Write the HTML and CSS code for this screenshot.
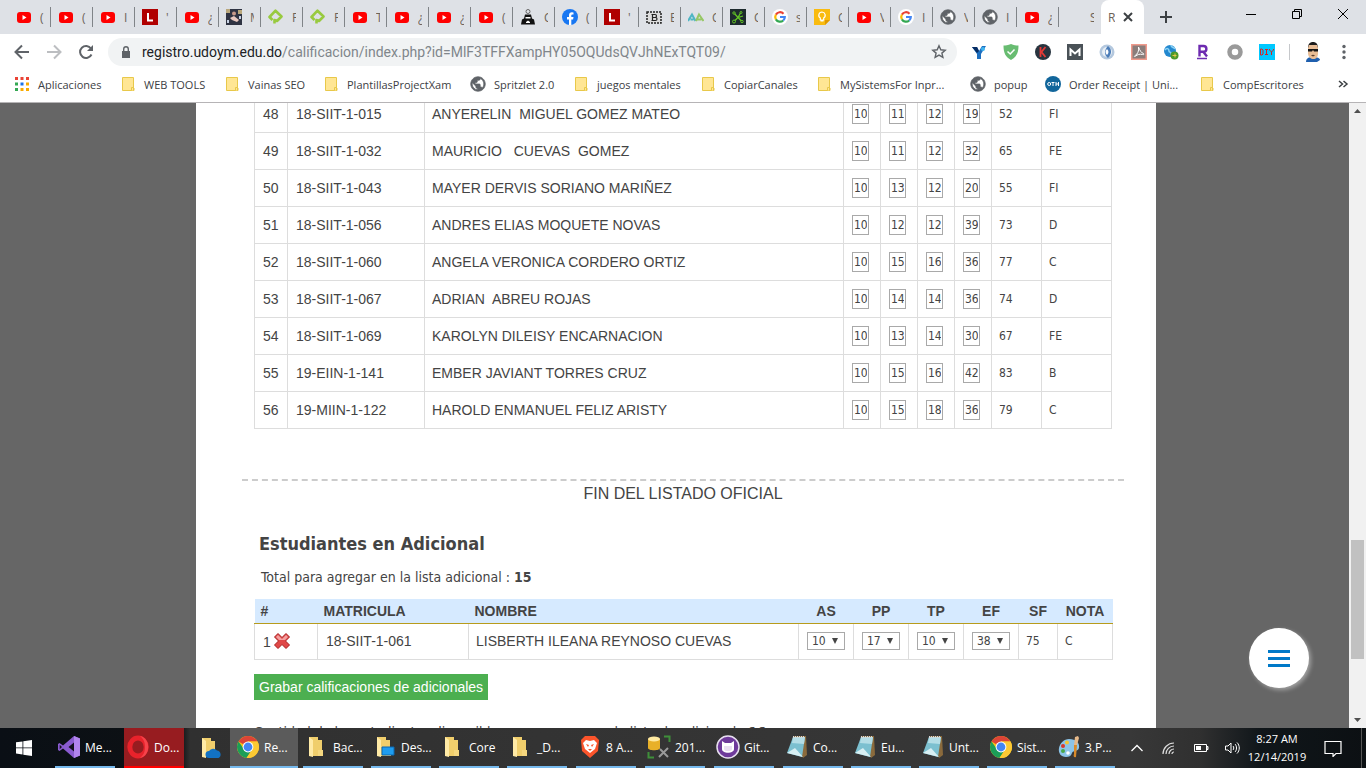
FILE: index.html
```html
<!DOCTYPE html>
<html lang="es">
<head>
<meta charset="utf-8">
<title>Registro de calificaciones</title>
<link rel="stylesheet" href="styles.css">
</head>
<body>
<svg class="defs" aria-hidden="true">
  <defs>
    <symbol id="yt" viewBox="0 0 16 16"><rect x="1" y="3" width="14" height="11" rx="3" fill="#f00"/><path d="M6.500 6v5l4-2.500z" fill="#fff"/></symbol>
    <symbol id="lbox" viewBox="0 0 16 16"><path d="M0 0h16v16H0z" fill="#b00000"/><path d="M6 4v7.500h5" fill="none" stroke="#fff" stroke-width="2"/></symbol>
    <symbol id="photo" viewBox="0 0 16 16"><path d="M0 0h16v16H0z" fill="#2f3342"/><path d="M0 0h4v4H0zM12 1h4v4h-4z" fill="#b9a77c"/><path d="M4 9l4-2 5 4-2 2-5-2z" fill="#e9c9c0"/><circle cx="8" cy="4.500" r="2" fill="#c99a8a"/><path d="M1 11h2v3H1zM13 7h2v3h-2z" fill="#c8d2e4"/></symbol>
    <symbol id="platzi" viewBox="0 0 16 16"><path d="M6.500 14.500V11L9 12l4.500-4.500L7.500 1.700 1.500 8l3 3" fill="none" stroke="#98ca3f" stroke-width="2.600" stroke-linejoin="round"/></symbol>
    <symbol id="robot" viewBox="0 0 16 16"><circle cx="8" cy="2.500" r="2" fill="none" stroke="#666"/><path d="M5 5.500h6l1 4 2 1 1 5H1l1-5 2-1z" fill="#111"/><path d="M5.500 8h5v1.500h-5zM6 13l2-1.500L10 13v1H6z" fill="#fff"/></symbol>
    <symbol id="fb" viewBox="0 0 16 16"><circle cx="8" cy="8" r="8" fill="#1877f2"/><path d="M7 16v-5.500H5V8h2V6.500C7 4.300 8.200 3.300 9.800 3.300l1.700.1v2h-1C9.500 5.400 9.300 6 9.300 6.700V8h2.200l-.4 2.500H9.300V16z" fill="#fff"/></symbol>
    <symbol id="bbox" viewBox="0 0 16 16"><path d="M1 3h14v11H1z" fill="#ddd" stroke="#222" stroke-width="1.500" stroke-dasharray="2 1"/><path d="M6.500 5.500v6M5.500 5.500h3.500a1.500 1.500 0 0 1 0 3H6.500h3a1.500 1.500 0 0 1 0 3h-4" fill="none" stroke="#222" stroke-width="1.200"/></symbol>
    <symbol id="aa" viewBox="0 0 16 16"><path d="M0 12L4 5.500 7.500 12M2.500 10.500h3" fill="none" stroke="#4fb6c4" stroke-width="2"/><path d="M8 12l3-6.500L15.500 12M9.500 10.500h4" fill="none" stroke="#96c765" stroke-width="2"/></symbol>
    <symbol id="net" viewBox="0 0 16 16"><path d="M0 0h16v16H0z" fill="#1d2a2d"/><path d="M4 4l4 4.500L13 7M8 8.500l4 4M8 8.500L4 12.500M8 8.500L11 3" fill="none" stroke="#62c425" stroke-width="1.300"/><g fill="#1d2a2d" stroke="#62c425"><circle cx="4" cy="4" r="1.200"/><circle cx="4" cy="12.500" r="1.500"/><circle cx="12" cy="12.500" r="1.200"/><circle cx="11" cy="3.500" r="1"/></g></symbol>
    <symbol id="google" viewBox="0 0 16 16"><circle cx="8" cy="8" r="8" fill="#fff"/><g fill="none" stroke-width="2.200"><path d="M11.500 4.700A4.800 4.800 0 0 0 3.900 5.600" stroke="#ea4335"/><path d="M3.900 5.600a4.800 4.800 0 0 0 0 4.800" stroke="#fbbc05"/><path d="M3.900 10.400a4.800 4.800 0 0 0 7.300 1.100" stroke="#34a853"/><path d="M11.200 11.500A4.800 4.800 0 0 0 12.800 8H8" stroke="#4285f4"/></g></symbol>
    <symbol id="keep" viewBox="0 0 16 16"><path d="M0 0h16v11l-5 5H0z" fill="#f9bb10"/><path d="M16 11l-5 5v-5z" fill="#e09a00"/><path d="M8 3a3.200 3.200 0 0 0-1.700 5.900V11h3.400V8.900A3.200 3.200 0 0 0 8 3zM6.500 12h3" fill="none" stroke="#fff" stroke-width="1.200"/></symbol>
    <symbol id="globe" viewBox="1 1 22 22"><circle cx="12" cy="12" r="9" fill="#fff"/><path d="M12 2C6.480 2 2 6.480 2 12s4.480 10 10 10 10-4.480 10-10S17.520 2 12 2zm-1 17.930c-3.950-.49-7-3.850-7-7.930 0-.62.08-1.210.21-1.790L9 15v1c0 1.100.9 2 2 2v1.930zm6.900-2.540c-.26-.81-1-1.390-1.900-1.390h-1v-3c0-.55-.45-1-1-1H8v-2h2c.55 0 1-.45 1-1V7h2c1.100 0 2-.9 2-2v-.41c2.930 1.190 5 4.060 5 7.410 0 2.080-.8 3.970-2.100 5.390z" fill="#5f6368" stroke="#5f6368"/></symbol>
    <symbol id="folder" viewBox="0 0 16 16"><path d="M2.500 1.500h11v10.500h.5v2.500H2.500z" fill="#ffe694" stroke="#e8c84a"/><path d="M11.500 14.500v-3h2v3" fill="#ffe694" stroke="#e8c84a"/></symbol>
    <symbol id="bigfolder" viewBox="0 0 24 24"><path d="M4 2h9v3h4v16H4z" fill="#f0ce6c"/><path d="M4 2l4 3v17l-4-1z" fill="#ffeaa6"/><path d="M13 15h5v6h-5z" fill="#f5d77f"/></symbol>
    <symbol id="chrome" viewBox="0 0 24 24"><circle cx="12" cy="12" r="11" fill="#fbc116"/><path d="M12 12L2.500 6.500A11 11 0 0 1 21.500 6.500H12z" fill="#dc4437"/><path d="M2.500 6.500a11 11 0 0 0 8 16.400L16 14.500l-7 1z" fill="#1b9e58"/><path d="M12 6.500h9.500a11 11 0 0 1-11 16.400L16 15z" fill="#fcc934"/><circle cx="12" cy="12" r="5.400" fill="#fff"/><circle cx="12" cy="12" r="4.400" fill="#4486f4"/></symbol>
    <symbol id="notepad" viewBox="0 0 24 24"><path d="M8 1h13l1 19-4 3z" fill="#8a6a3c"/><path d="M8 2h12l-3 20L2 18z" fill="#7cc0d0"/><path d="M8 2h12l-1 7-12-1z" fill="#b4dde6"/><path d="M2 18l8-5 8 9z" fill="#d8eff3"/><path d="M8 2h12" stroke="#d8d8d8" stroke-width="2" stroke-dasharray="1 1"/></symbol>
  </defs>
</svg>

<header class="browser">
  <div class="tabstrip">
    <div class="tabs">
      <div class="tab"><svg><use href="#yt"/></svg><span>(</span></div>
      <div class="tab"><svg><use href="#yt"/></svg><span>(</span></div>
      <div class="tab"><svg><use href="#yt"/></svg><span>I</span></div>
      <div class="tab"><svg><use href="#lbox"/></svg><span>'</span></div>
      <div class="tab"><svg><use href="#yt"/></svg><span>¿</span></div>
      <div class="tab"><svg><use href="#photo"/></svg><span>M</span></div>
      <div class="tab"><svg><use href="#platzi"/></svg><span>F</span></div>
      <div class="tab"><svg><use href="#platzi"/></svg><span>F</span></div>
      <div class="tab"><svg><use href="#yt"/></svg><span>T</span></div>
      <div class="tab"><svg><use href="#yt"/></svg><span>¿</span></div>
      <div class="tab"><svg><use href="#yt"/></svg><span>¿</span></div>
      <div class="tab"><svg><use href="#yt"/></svg><span>(</span></div>
      <div class="tab"><svg><use href="#robot"/></svg><span>C</span></div>
      <div class="tab"><svg><use href="#fb"/></svg><span>(</span></div>
      <div class="tab"><svg><use href="#lbox"/></svg><span>'</span></div>
      <div class="tab"><svg><use href="#bbox"/></svg><span>E</span></div>
      <div class="tab"><svg><use href="#aa"/></svg><span>C</span></div>
      <div class="tab"><svg><use href="#net"/></svg><span>C</span></div>
      <div class="tab"><svg><use href="#google"/></svg><span>s</span></div>
      <div class="tab"><svg><use href="#keep"/></svg><span>C</span></div>
      <div class="tab"><svg><use href="#yt"/></svg><span>V</span></div>
      <div class="tab"><svg><use href="#google"/></svg><span>I</span></div>
      <div class="tab"><svg><use href="#globe"/></svg><span>V</span></div>
      <div class="tab"><svg><use href="#globe"/></svg><span>I</span></div>
      <div class="tab"><svg><use href="#yt"/></svg><span>¿</span></div>
      <div class="tab plain"><svg></svg><span>S</span></div>
      <div class="tab active"><span>R</span><button class="bare" aria-label="Cerrar pestaña"><svg class="x" viewBox="0 0 10 10"><path d="M1 1l8 8M9 1L1 9" stroke="#3c4043" stroke-width="2"/></svg></button></div>
    </div>
    <button class="bare newtab" aria-label="Nueva pestaña"><svg viewBox="0 0 16 16"><path d="M8 2v12M2 8h12" stroke="#3c4043" stroke-width="2"/></svg></button>
    <div class="wincontrols">
      <button class="bare" aria-label="Minimizar"><svg viewBox="0 0 12 12"><path d="M1 6.500h10" stroke="#000"/></svg></button>
      <button class="bare" aria-label="Restaurar"><svg viewBox="0 0 12 12"><path d="M1.500 3.500h7v7h-7zM3.500 3.500v-2h7v7h-2" fill="none" stroke="#000"/></svg></button>
      <button class="bare" aria-label="Cerrar"><svg viewBox="0 0 12 12"><path d="M1 1l10 10M11 1L1 11" stroke="#000"/></svg></button>
    </div>
  </div>

  <div class="toolbar">
    <nav class="navbuttons">
      <button class="bare" aria-label="Atrás"><svg viewBox="0 0 16 16"><path d="M15 8H2M8 1.500L1.500 8 8 14.500" fill="none" stroke="#5f6368" stroke-width="2"/></svg></button>
      <button class="bare" aria-label="Adelante"><svg viewBox="0 0 16 16"><path d="M1 8h13M8 1.500L14.500 8 8 14.500" fill="none" stroke="#bcbec1" stroke-width="2"/></svg></button>
      <button class="bare" aria-label="Recargar"><svg viewBox="0 0 16 16"><path d="M13.500 10.500a6 6 0 1 1-.5-6" fill="none" stroke="#5f6368" stroke-width="2"/><path d="M15 1v6H9z" fill="#5f6368"/></svg></button>
    </nav>
    <div class="omnibox">
      <svg class="lock" viewBox="0 0 10 12"><path d="M1 5h8v7H1z" fill="#5f6368"/><path d="M2.700 5V3a2.300 2.300 0 0 1 4.600 0v2" fill="none" stroke="#5f6368" stroke-width="1.400"/></svg>
      <div class="url"><b>registro.udoym.edu.do</b>/calificacion/index.php?id=MlF3TFFXampHY05OQUdsQVJhNExTQT09/</div>
      <button class="bare" aria-label="Marcador"><svg viewBox="0 0 16 16"><path d="M8 1.800l1.800 4 4.400.4-3.300 2.900 1 4.300L8 11.100l-3.900 2.300 1-4.300L1.800 6.200l4.400-.4z" fill="none" stroke="#5f6368" stroke-width="1.400"/></svg></button>
    </div>
    <div class="extensions">
      <svg viewBox="0 0 16 16"><path d="M1 3h5l2 4 3-5h4l-5 8v5H6v-5z" fill="#1d6fc0"/><path d="M1 3h5l2 4-2 2z" fill="#082d63"/><circle cx="12" cy="5" r="2" fill="#3fb4ef"/></svg>
      <svg viewBox="0 0 16 16"><path d="M8 0c3 1.500 5.500 1.500 7.500 1.500C15.500 9 13.500 13 8 16 2.500 13 .5 9 .5 1.500 2.500 1.500 5 1.500 8 0z" fill="#68bc71"/><path d="M4.500 7.500L7.200 10l4.300-4.500" fill="none" stroke="#fff" stroke-width="1.500"/></svg>
      <svg viewBox="0 0 16 16"><circle cx="8" cy="8" r="8" fill="#28343f"/><path d="M5.500 3v10M10.500 3L6.500 8l4 5" fill="none" stroke="#e53935" stroke-width="1.800"/></svg>
      <svg viewBox="0 0 16 16"><path d="M0 0h16v16H0z" fill="#4a5257"/><path d="M3.500 12V5.500L8 9.500l4.500-4V12" fill="none" stroke="#fff" stroke-width="2"/></svg>
      <svg viewBox="0 0 16 16"><circle cx="8" cy="8" r="7.500" fill="#b4c8de"/><circle cx="8" cy="8" r="5" fill="#e8eff6"/><path d="M9 2c4 3 4 8 0 12C5 11 5 6 9 2z" fill="#4c7db8"/><path d="M8 5c2 2 2 4 0 6-2-2-2-4 0-6z" fill="#fff"/></svg>
      <svg viewBox="0 0 16 16"><path d="M0 0h16v16H0z" fill="#f09a8c"/><path d="M1.500 1.500h13v13h-13z" fill="#8a7d7b"/><path d="M7.500 3c1.500 4 3 6 5 6.500 1 .5.500 1.500-1 1-3-.8-5 0-7 1.700-1.500 1-1.500-.2 0-1 2-1.200 3.700-4 3-8.200z" fill="none" stroke="#fff"/></svg>
      <svg viewBox="0 0 16 16"><circle cx="7" cy="7" r="6" fill="#2388cf"/><path d="M2 6c2-3 4-1 4 1s3 0 2 4M8 1c0 3 3 2 4 4" stroke="#8bd2f5" fill="none" stroke-width="1.500"/><circle cx="11.500" cy="11.500" r="4" fill="#4c9a2a"/><path d="M9.500 11.500h4M12 9.500v4" stroke="#e6c74c"/></svg>
      <svg viewBox="0 0 16 16"><path d="M4.500 12.500V2h4a2.800 2.800 0 0 1 0 5.800h-4M8.500 8l3.500 4.500" fill="none" stroke="#6d2bb0" stroke-width="2.400"/><path d="M2 14.500h10" stroke="#6d2bb0" stroke-width="1.500"/></svg>
      <svg viewBox="0 0 16 16"><circle cx="8" cy="8" r="5.500" fill="#fff" stroke="#9a9a9a" stroke-width="4.500"/></svg>
      <svg viewBox="0 0 16 16"><path d="M0 0h16v16H0z" fill="#00c8ff"/><path d="M1.500 5v6h1.500l1-1V6L3 5zM6 5.500h3M7.500 5v6M6 10.500h3M10.500 5v1l2 2v3M14.500 5v1l-2 2" fill="none" stroke="#d22424"/></svg>
    </div>
    <i class="divider"></i>
    <svg class="avatar" viewBox="0 0 16 20"><path d="M1 20c0-4 3-5 7-5s7 1 7 3l-3 2z" fill="#1f5fae"/><path d="M3 6c0-3 2-5 5-5s5 2 5 5v5c0 4-2 6-4.500 6S3 15 3 11z" fill="#e9bd95"/><path d="M3 6c0-4 2-6 5-6s5 2 5 6l-1-3H4z" fill="#1c1c1c"/><path d="M3 7h10v2.500H9L8 8 7 9.500H3z" fill="#151515"/><path d="M6 13.500c1-1 3-1 4 0l-2 1z" fill="#5b4030"/></svg>
    <button class="bare dots" aria-label="Menú"><svg viewBox="0 0 4 16"><g fill="#5f6368"><circle cx="2" cy="2.500" r="1.700"/><circle cx="2" cy="8" r="1.700"/><circle cx="2" cy="13.500" r="1.700"/></g></svg></button>
  </div>

  <nav class="bookmarks">
    <a href="#"><svg viewBox="0 0 16 16"><path d="M1 1h3v3H1zM6.500 1h3v3h-3zM12 1h3v3h-3z" fill="#ea4335"/><path d="M1 6.500h3v3H1zM1 12h3v3H1z" fill="#34a853"/><path d="M6.500 6.500h3v3h-3z" fill="#1a73e8"/><path d="M12 6.500h3v3h-3zM6.500 12h3v3h-3zM12 12h3v3h-3z" fill="#f9ab00"/></svg>Aplicaciones</a>
    <a href="#"><svg><use href="#folder"/></svg>WEB TOOLS</a>
    <a href="#"><svg><use href="#folder"/></svg>Vainas SEO</a>
    <a href="#"><svg><use href="#folder"/></svg>PlantillasProjectXam</a>
    <a href="#"><svg><use href="#globe"/></svg>Spritzlet 2.0</a>
    <a href="#"><svg><use href="#folder"/></svg>juegos mentales</a>
    <a href="#"><svg><use href="#folder"/></svg>CopiarCanales</a>
    <a href="#"><svg><use href="#folder"/></svg>MySistemsFor Inpr...</a>
    <a href="#"><svg><use href="#globe"/></svg>popup</a>
    <a href="#"><svg viewBox="0 0 16 16"><circle cx="8" cy="8" r="8" fill="#11669b"/><circle cx="4.200" cy="8" r="1.500" fill="none" stroke="#fff"/><path d="M6.500 6.500h3M8 6.500V10M11 6v4M13.500 6v4M11 8h2.500" stroke="#fff" fill="none"/></svg>Order Receipt | Uni...</a>
    <a href="#"><svg><use href="#folder"/></svg>CompEscritores</a>
    <button class="bare more" aria-label="Más marcadores"><svg viewBox="0 0 12 12"><path d="M2 3l3.500 3L2 9M6.500 3L10 6 6.500 9" fill="none" stroke="#3c4043" stroke-width="1.500"/></svg></button>
  </nav>
</header>

<div class="viewport">
  <main class="page">
    <div class="paper">
      <table class="grades">
        <colgroup><col class="c-num"><col class="c-mat"><col><col class="c-in" span="4"><col class="c-sf"><col class="c-nota"></colgroup>
        <tbody>
          <tr><td>48</td><td>18-SIIT-1-015</td><td>ANYERELIN  MIGUEL GOMEZ MATEO</td><td><input aria-label="AS" value="10"></td><td><input aria-label="PP" value="11"></td><td><input aria-label="TP" value="12"></td><td><input aria-label="EF" value="19"></td><td>52</td><td>FI</td></tr>
          <tr><td>49</td><td>18-SIIT-1-032</td><td>MAURICIO   CUEVAS  GOMEZ</td><td><input aria-label="AS" value="10"></td><td><input aria-label="PP" value="11"></td><td><input aria-label="TP" value="12"></td><td><input aria-label="EF" value="32"></td><td>65</td><td>FE</td></tr>
          <tr><td>50</td><td>18-SIIT-1-043</td><td>MAYER DERVIS SORIANO MARIÑEZ</td><td><input aria-label="AS" value="10"></td><td><input aria-label="PP" value="13"></td><td><input aria-label="TP" value="12"></td><td><input aria-label="EF" value="20"></td><td>55</td><td>FI</td></tr>
          <tr><td>51</td><td>18-SIIT-1-056</td><td>ANDRES ELIAS MOQUETE NOVAS</td><td><input aria-label="AS" value="10"></td><td><input aria-label="PP" value="12"></td><td><input aria-label="TP" value="12"></td><td><input aria-label="EF" value="39"></td><td>73</td><td>D</td></tr>
          <tr><td>52</td><td>18-SIIT-1-060</td><td>ANGELA VERONICA CORDERO ORTIZ</td><td><input aria-label="AS" value="10"></td><td><input aria-label="PP" value="15"></td><td><input aria-label="TP" value="16"></td><td><input aria-label="EF" value="36"></td><td>77</td><td>C</td></tr>
          <tr><td>53</td><td>18-SIIT-1-067</td><td>ADRIAN  ABREU ROJAS</td><td><input aria-label="AS" value="10"></td><td><input aria-label="PP" value="14"></td><td><input aria-label="TP" value="14"></td><td><input aria-label="EF" value="36"></td><td>74</td><td>D</td></tr>
          <tr><td>54</td><td>18-SIIT-1-069</td><td>KAROLYN DILEISY ENCARNACION</td><td><input aria-label="AS" value="10"></td><td><input aria-label="PP" value="13"></td><td><input aria-label="TP" value="14"></td><td><input aria-label="EF" value="30"></td><td>67</td><td>FE</td></tr>
          <tr><td>55</td><td>19-EIIN-1-141</td><td>EMBER JAVIANT TORRES CRUZ</td><td><input aria-label="AS" value="10"></td><td><input aria-label="PP" value="15"></td><td><input aria-label="TP" value="16"></td><td><input aria-label="EF" value="42"></td><td>83</td><td>B</td></tr>
          <tr><td>56</td><td>19-MIIN-1-122</td><td>HAROLD ENMANUEL FELIZ ARISTY</td><td><input aria-label="AS" value="10"></td><td><input aria-label="PP" value="15"></td><td><input aria-label="TP" value="18"></td><td><input aria-label="EF" value="36"></td><td>79</td><td>C</td></tr>
        </tbody>
      </table>

      <p class="listend">FIN DEL LISTADO OFICIAL</p>

      <section class="extra">
        <h2>Estudiantes en Adicional</h2>
        <p class="total">Total para agregar en la lista adicional : <b>15</b></p>
        <table class="additional">
          <colgroup><col class="a-num"><col class="a-mat"><col><col class="a-in" span="4"><col class="a-sf"><col class="a-nota"></colgroup>
          <thead>
            <tr><th>#</th><th>MATRICULA</th><th>NOMBRE</th><th>AS</th><th>PP</th><th>TP</th><th>EF</th><th>SF</th><th>NOTA</th></tr>
          </thead>
          <tbody>
            <tr>
              <td><div class="rownum">1<button class="bare" aria-label="Eliminar"><svg viewBox="0 0 18 18"><path d="M5 1.500l4 4 4-4L16.500 5l-4 4 4 4-3.500 3.500-4-4-4 4L1.500 13l4-4-4-4z" fill="#e04848" stroke="#a81c1c" stroke-linejoin="round"/><path d="M5 3l4 4 4-4 2 2-3 3H6L3 5z" fill="#f4a0a0"/></svg></button></div></td>
              <td>18-SIIT-1-061</td>
              <td>LISBERTH ILEANA REYNOSO CUEVAS</td>
              <td><select aria-label="AS"><option>10</option></select></td>
              <td><select aria-label="PP"><option>17</option></select></td>
              <td><select aria-label="TP"><option>10</option></select></td>
              <td><select aria-label="EF"><option>38</option></select></td>
              <td>75</td><td>C</td>
            </tr>
          </tbody>
        </table>
        <button class="save">Grabar calificaciones de adicionales</button>
        <p class="quota">Cantidad de los estudiantes disponibles para agregar en la lista de adicional : <b>16</b></p>
      </section>
    </div>
    <button class="fab" aria-label="Menú de la página"><i></i><i></i><i></i></button>
  </main>
  <div class="scrollbar">
    <svg viewBox="0 0 17 17"><path d="M5 10h7L8.500 6z" fill="#505050"/></svg>
    <div class="track"><div class="thumb"></div></div>
    <svg viewBox="0 0 17 17"><path d="M5 7h7l-3.500 4z" fill="#505050"/></svg>
  </div>
</div>

<footer class="taskbar">
  <button class="bare start" aria-label="Inicio"><svg viewBox="0 0 16 16"><path d="M0 2.300l6.500-.9v6.100H0zM7.300 1.300L16 0v7.500H7.300zM0 8.300h6.500v6.200L0 13.600zM7.300 8.300H16V16l-8.700-1.300z" fill="#fff"/></svg></button>
  <button class="bare task"><svg viewBox="0 0 24 24"><path d="M17 1l6 2.500v17L17 23 6 13.500 2.500 16 1 15V9l1.500-1L6 10.500z" fill="#8a5bd0"/><path d="M17 1l6 2.500v17L17 23z" fill="#b284ee"/><path d="M17 7.500v9L11.500 12zM2.700 9.800v4.400L5 12z" fill="#14111f"/></svg>Me...</button>
  <button class="bare task alert"><svg viewBox="0 0 24 24"><ellipse cx="12" cy="12" rx="8.200" ry="9" fill="none" stroke="#e8222b" stroke-width="5"/><path d="M14 1c11 2 11 20 0 22 4-3 5-7 5-11s-1-8-5-11z" fill="#ff5a60" opacity=".6"/></svg>Do...</button>
  <button class="bare onedrive" aria-label="OneDrive"><svg viewBox="0 0 24 24"><use href="#bigfolder"/><path d="M11 22a3.500 3.500 0 0 1 0-7 5 5 0 0 1 8-.5A4 4 0 0 1 20.500 22z" fill="#1272c4"/></svg></button>
  <button class="bare task current"><svg><use href="#chrome"/></svg>Re...</button>
  <div class="tasks">
    <button class="bare task"><svg><use href="#bigfolder"/></svg>Bac...</button>
    <button class="bare task"><svg viewBox="0 0 24 24"><use href="#bigfolder"/><path d="M9 12h12v8H9z" fill="#1e9df0" stroke="#0b66b0"/></svg>Des...</button>
    <button class="bare task"><svg><use href="#bigfolder"/></svg>Core</button>
    <button class="bare task"><svg><use href="#bigfolder"/></svg>_D...</button>
    <button class="bare task"><svg viewBox="0 0 24 24"><path d="M7 1h10l4 4-1 11-8 7-8-7L3 5z" fill="#fb542b"/><path d="M8 5l4 1 4-1 3 3-2 6-5 4-5-4-2-6z" fill="#fff"/><path d="M8 9l3 1-1 2zM16 9l-3 1 1 2zM10 14h4l-2 2z" fill="#fb542b"/></svg>8 A...</button>
    <button class="bare task"><svg viewBox="0 0 24 24"><path d="M1 4v9c0 3 12 3 12 0V4z" fill="#e8b028"/><ellipse cx="7" cy="4" rx="6" ry="2.500" fill="#ffe9a0"/><path d="M17 1.500h5.500V7M1.500 17v5.500H7" fill="none" stroke="#3f8f3a" stroke-width="2"/><path d="M12 22l9-9M13 14l8 8" stroke="#9a9a9a" stroke-width="2"/></svg>201...</button>
    <button class="bare task"><svg viewBox="0 0 24 24"><circle cx="12" cy="12" r="11" fill="#6e3a9a" stroke="#e8e0f0" stroke-width="1.500"/><path d="M6 6l3 2h6l3-2v8c0 5-12 5-12 0z" fill="#fff"/><path d="M8 11h8v3c0 3-8 3-8 0z" fill="#eadff2"/></svg>Git...</button>
    <button class="bare task"><svg><use href="#notepad"/></svg>Co...</button>
    <button class="bare task"><svg><use href="#notepad"/></svg>Eu...</button>
    <button class="bare task"><svg><use href="#notepad"/></svg>Unt...</button>
    <button class="bare task"><svg><use href="#chrome"/></svg>Sist...</button>
    <button class="bare task"><svg viewBox="0 0 24 24"><path d="M12 4c7 0 11 4 10 9-1 4-6 2-7 5s-3 4-6 4c-5 0-8-4-7-9s5-9 10-9z" fill="#8cc4e8"/><g><circle cx="6" cy="11" r="2" fill="#d8392b"/><circle cx="10" cy="7.500" r="2" fill="#f4c430"/><circle cx="6" cy="16" r="2" fill="#4aa84a"/><circle cx="11" cy="18" r="1.800" fill="#fff"/></g><path d="M17 10h3l-1 12c-2 1-3-1-2-3z" fill="#d88a2a"/><path d="M17 10l1-8 3-1 1 2-2 7z" fill="#e6b98a"/></svg>3.P...</button>
  </div>
  <div class="tray">
    <svg viewBox="0 0 16 16"><path d="M2.500 11L8 5.500l5.500 5.500" fill="none" stroke="#fff" stroke-width="1.300"/></svg>
    <svg viewBox="0 0 16 16"><path d="M2 14A11 11 0 0 1 13 3M5 14a8 8 0 0 1 8-8M8 14a5 5 0 0 1 5-5M11 14a2 2 0 0 1 2-2" fill="none" stroke="#ddd" stroke-width="1.200"/></svg>
    <svg viewBox="0 0 16 16"><path d="M1.500 4.500h12v7h-12zM14 6.500h1v3h-1z" fill="none" stroke="#fff"/><path d="M3 6h5v4H3z" fill="#fff"/></svg>
    <svg viewBox="0 0 16 16"><path d="M.5 6h2.500l3-3v10L3 10H.5zM8 6c1 1 1 3 0 4M10 4c2 2 2 6 0 8M12 2.500c3 3 3 8 0 11" fill="none" stroke="#fff"/></svg>
  </div>
  <div class="clock"><span>8:27 AM</span><span>12/14/2019</span></div>
  <button class="bare notif" aria-label="Notificaciones"><svg viewBox="0 0 18 18"><path d="M1 2.500h16v12h-5l-3 3v-3H1z" fill="none" stroke="#fff" stroke-width="1.200"/></svg></button>
  <i class="peek"></i>
</footer>
</body>
</html>
```
FILE: styles.css
```css
* { box-sizing: border-box; }

body {
  margin: 0;
  height: 100vh;
  display: flex;
  flex-direction: column;
  overflow: hidden;
  font-family: "Open Sans", "Noto Sans", sans-serif;
  font-size: 11px;
  color: #444;
}

p, h2 { margin: 0; }
svg { display: block; flex: none; }
.defs { position: absolute; width: 0; height: 0; }

.bare {
  display: flex;
  align-items: center;
  justify-content: center;
  padding: 0;
  border: 0;
  background: none;
  font: inherit;
  color: inherit;
}

/* Browser chrome */
.browser {
  flex: none;
  background: #fff;
  border-bottom: 1px solid #b6b4b6;
}

.tabstrip {
  display: flex;
  height: 34px;
  background: #dee1e6;
}

.tabs {
  display: flex;
  padding-left: 9px;
}

.tab {
  display: flex;
  align-items: center;
  gap: 8px;
  width: 42px;
  padding-left: 7px;
  background: linear-gradient(#808488, #808488) right center / 1px 20px no-repeat;
  font-size: 12px;
  color: #6d6358;
}
.tab svg { width: 16px; height: 16px; }
.tab span { width: 4px; overflow: hidden; }
.tab.plain { background: none; }
.tab.active {
  width: 43px;
  gap: 8px;
  background: #fff;
  border-radius: 8px 8px 0 0;
}
.tab.active span { width: 7px; }
.tab svg.x { width: 10px; height: 10px; }

.newtab { width: 44px; }
.newtab svg { width: 16px; height: 16px; }

.wincontrols {
  display: flex;
  height: 28px;
  margin-left: auto;
}
.wincontrols button { width: 46px; }
.wincontrols svg { width: 12px; height: 12px; }

.toolbar {
  display: flex;
  align-items: center;
  height: 36px;
  padding: 0 20px 0 14px;
}

.navbuttons {
  display: flex;
  gap: 16px;
  margin-right: 14px;
}
.navbuttons svg { width: 16px; height: 16px; }

.omnibox {
  display: flex;
  align-items: center;
  flex: 1;
  min-width: 0;
  height: 28px;
  padding: 0 10px 0 13px;
  border-radius: 14px;
  background: #f1f3f4;
}
.lock { width: 10px; height: 12px; }
.url {
  flex: 1;
  min-width: 0;
  padding-left: 11px;
  overflow: hidden;
  white-space: nowrap;
  font-family: Roboto, "Open Sans", sans-serif;
  font-size: 14px;
  color: #80868b;
}
.url b { font-weight: 400; color: #202124; }
.omnibox button svg { width: 16px; height: 16px; }

.extensions {
  display: flex;
  gap: 16px;
  margin-left: 14px;
}
.extensions svg { width: 16px; height: 16px; }
.divider {
  width: 1px;
  height: 16px;
  margin: 0 15px 0 14px;
  background: #c6c8cb;
}
.avatar { width: 16px; height: 20px; }
.dots { margin-left: 21px; }
.dots svg { width: 4px; height: 16px; }

.bookmarks {
  display: grid;
  grid-template-columns: 106px 104px 99px 147px 103px 127px 116px 154px 75px 154px 1fr 12px;
  height: 32px;
  padding: 0 17px 4px 14px;
}
.bookmarks a {
  display: flex;
  align-items: center;
  gap: 8px;
  white-space: nowrap;
  text-decoration: none;
  color: #3c4043;
}
.bookmarks svg { width: 16px; height: 16px; }
.more svg { width: 12px; height: 12px; }

/* Web page */
.viewport {
  display: flex;
  flex: 1;
  min-height: 0;
}

.page {
  position: relative;
  flex: 1;
  min-width: 0;
  padding-left: 3px;
  overflow: hidden;
  background: #666;
}

.paper {
  max-width: 960px;
  min-height: 100%;
  margin: 0 auto;
  padding: 0 32px 0 46px;
  background: #fff;
  font-family: "DejaVu Sans Condensed", "Noto Sans", sans-serif;
  font-size: 12px;
}

table {
  width: 100%;
  table-layout: fixed;
  border-collapse: collapse;
}
td {
  padding: 0 7px;
  border: 1px solid #ddd;
  white-space: pre;
}
td:nth-child(-n+3), th { font-family: "Liberation Sans", Arial, sans-serif; font-size: 14px; }
td:nth-child(-n+2) { padding-left: 8px; }

/* The list is scrolled so that its first row is partly under the toolbar. */
.grades {
  width: calc(100% - 24px);
  margin: -8px 12px 50px;
}
.grades tr { height: 37px; }
.grades td:nth-child(n+4):nth-child(-n+7) { padding: 0 8px; }
.c-num { width: 33px; }
.c-mat { width: 137px; }
.c-in { width: 37px; }
.c-sf { width: 50px; }
.c-nota { width: 70px; }

.grades input {
  display: block;
  width: 17px;
  height: 20px;
  padding: 0 1px;
  border: 1px solid #a9a9a9;
  background: #fff;
  font: inherit;
  color: inherit;
}

.listend {
  border-top: 2px dashed #ccc;
  font: 16px/26px "Liberation Sans", Arial, sans-serif;
  text-align: center;
}

.extra { padding: 25px 12px 0; }
.extra h2 {
  padding-left: 5px;
  font-size: 18px;
  line-height: 24px;
}
.total {
  margin: 11px 0 12px;
  padding-left: 7px;
  font-size: 14px;
  line-height: 20px;
}

.additional { width: calc(100% + 1px); }
.additional tbody tr { height: 36px; }
.additional th {
  height: 24px;
  padding: 0 6px;
  background: #d6eaff;
  border-bottom: 1px solid #b79b1c;
  text-align: left;
}
.additional th:nth-child(n+4) { padding: 0; text-align: center; }
.a-num { width: 63px; }
.a-mat { width: 151px; }
.a-in { width: 55px; }
.a-sf { width: 39px; }
.a-nota { width: 55px; }

.rownum {
  display: flex;
  align-items: flex-end;
  gap: 2px;
}
.rownum svg { width: 18px; height: 18px; }

select {
  display: block;
  width: 38px;
  height: 18px;
  margin: 0 auto;
  padding: 0 4px;
  border: 1px solid #a9a9a9;
  border-radius: 0;
  appearance: none;
  background: #fff url("data:image/svg+xml,%3Csvg xmlns='http://www.w3.org/2000/svg' width='6' height='6'%3E%3Cpath d='M0 0h6L3 6z' fill='%23444'/%3E%3C/svg%3E") right 6px center no-repeat;
  font: inherit;
  color: inherit;
}

.save {
  display: block;
  height: 26px;
  margin: 14px 0 22px;
  padding: 0 5px;
  border: 0;
  background: #4caf50;
  font: 14px "Liberation Sans", Arial, sans-serif;
  color: #fff;
}
.quota { font-size: 14px; line-height: 20px; white-space: nowrap; }

.fab {
  position: absolute;
  right: 40px;
  bottom: 40px;
  display: flex;
  flex-direction: column;
  align-items: center;
  justify-content: center;
  gap: 4px;
  width: 60px;
  height: 60px;
  padding: 0;
  border: 0;
  border-radius: 50%;
  background: #fff;
  box-shadow: 2px 2px 4px rgba(255, 255, 255, .4);
}
.fab i {
  width: 22px;
  height: 3px;
  background: #0079c8;
}

.scrollbar {
  display: flex;
  flex-direction: column;
  width: 17px;
  background: #f1f1f1;
}
.scrollbar svg { width: 17px; height: 17px; }
.track {
  display: flex;
  flex-direction: column;
  justify-content: flex-end;
  flex: 1;
  padding: 0 2px 52px;
}
.thumb { height: 22%; background: #c1c1c1; }

/* Taskbar */
.taskbar {
  display: flex;
  flex: none;
  height: 40px;
  background: linear-gradient(90deg, #0a0f15 0, #0d1114 180px, #303030 190px, #383838 1130px, #303030 1200px, #10161a 1260px, #0c1013 100%);
  font-size: 12px;
  color: #fff;
}
.start { width: 48px; margin-right: 7px; }
.start svg { width: 16px; height: 16px; }
.task {
  justify-content: flex-start;
  gap: 4px;
  width: 60px;
  padding: 0 0 0 2px;
  border-bottom: 2px solid #76b9ed;
  white-space: nowrap;
}
.task svg { width: 24px; height: 24px; }
.alert {
  margin-left: 9px;
  background: #971c20;
  border-color: #f00;
}
.onedrive { width: 46px; padding-left: 6px; }
.onedrive svg { width: 24px; height: 24px; }
.current {
  width: 68px;
  padding-left: 6px;
  background: #5b5b5b;
}
.tasks {
  display: grid;
  grid-template-columns: repeat(3, 68px) repeat(4, 69px) repeat(4, 68px) 60px;
  margin-left: 5px;
}
.tray {
  display: flex;
  align-items: center;
  gap: 16px;
  margin-left: 14px;
}
.tray svg { width: 16px; height: 16px; }
.clock {
  display: flex;
  flex-direction: column;
  justify-content: center;
  align-items: center;
  flex: 1;
  font-size: 11px;
  line-height: 18px;
}
.notif { width: 40px; }
.notif svg { width: 18px; height: 18px; }
.peek {
  width: 5px;
  margin-left: 8px;
  border-left: 1px solid #555;
}
```
